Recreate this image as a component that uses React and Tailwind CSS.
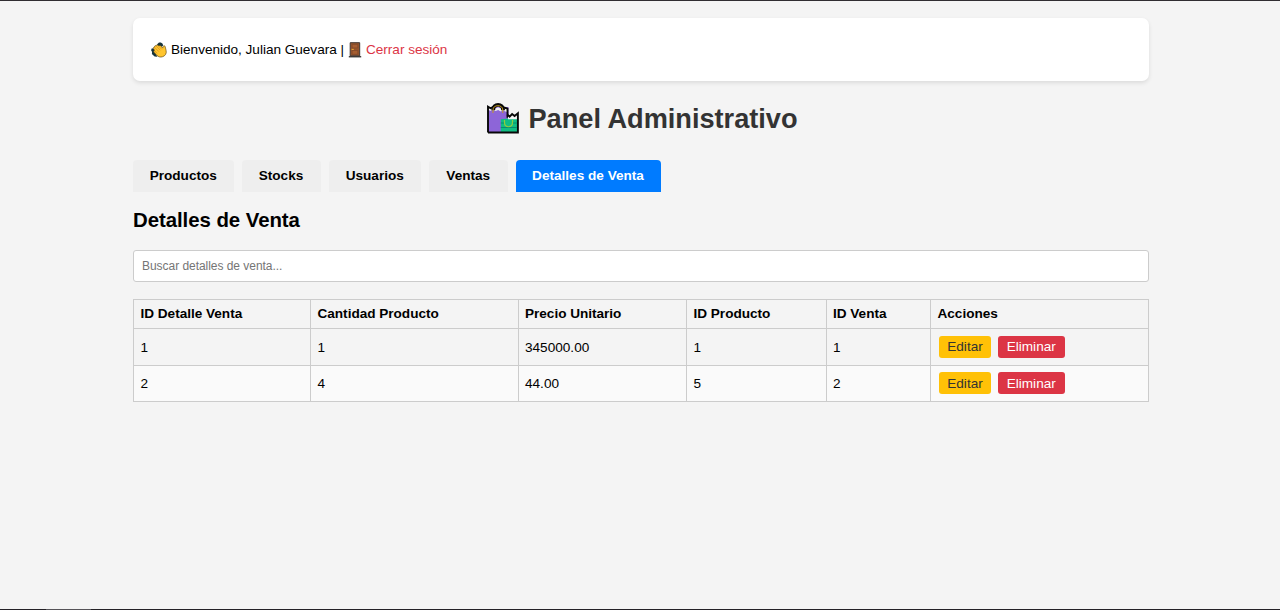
const tabs = [
  { label: 'Productos', size: 'w-[100.5px]' },
  { label: 'Stocks', size: 'w-[79px]' },
  { label: 'Usuarios', size: 'w-[92.5px]' },
  { label: 'Ventas', size: 'w-[78.5px]' },
  { label: 'Detalles de Venta', size: 'w-[145px]', active: true },
];

const columns = [
  { label: 'ID Detalle Venta', size: 'w-[177px]' },
  { label: 'Cantidad Producto', size: 'w-[207.5px]' },
  { label: 'Precio Unitario', size: 'w-[168.5px]' },
  { label: 'ID Producto', size: 'w-[139.5px]' },
  { label: 'ID Venta', size: 'w-[104.5px]' },
  { label: 'Acciones', size: 'w-[218px]' },
];

const rows = [
  { cells: ['1', '1', '345000.00', '1', '1'], size: 'h-[37px]' },
  { cells: ['2', '4', '44.00', '5', '2'], size: 'h-[36px]' },
];

function ClapIcon() {
  return (
    <svg viewBox="0 0 16 16" className="h-4 w-4 shrink-0" aria-hidden="true">
      <path d="M6.2 2.2 8 .4l1.8.2 1.6.9.9 2-1.8 1.3-4.4.4zM.4 6.8l1.6-.5 2 2 2.2 6.5-2.6-.4L.9 12l.2-2.2L.2 8.7z" fill="#17343b" />
      <path d="M2.6 6.6c-.5-1 .2-1.8 1-1.5-.3-1 .6-1.8 1.5-1.3.2-1 1.3-1.2 2-.5l.8.8c.5-.8 1.5-.8 2 0l1.8 2 .5-1.7c.4-1 1.8-.8 2 .3l.9 3.7c.8 3.2-1 5.5-3.5 6.3-2.1.8-4.2.2-5.6-1.2l-2.8-3c-.8-.8-.5-1.7.3-2z" fill="#ffc52e" stroke="#5b4514" strokeWidth=".65" />
      <path d="m3.6 5.4 4.2 4.2M5.1 4l4.3 4.3M7.8 4.3l3 3M3.4 8.5l2.8 2.8" fill="none" stroke="#d08a1d" strokeWidth=".65" />
    </svg>
  );
}

function DoorIcon() {
  return (
    <svg viewBox="0 0 14 16" className="h-4 w-3.5 shrink-0" aria-hidden="true">
      <path d="M2.2.7h9.5v13.2H2.2z" fill="#95552e" stroke="#403733" />
      <path d="M4.1 2.4h5.7v3.5H4.1zM4.1 8.5h5.7v3.8H4.1z" fill="#a65e31" stroke="#7b4428" strokeWidth=".6" />
      <path d="M.8 14.1h12.4v1.3H.8z" fill="#302d2c" />
      <path d="M3.6 7.4h2.2" stroke="#efaa35" strokeWidth="1" />
    </svg>
  );
}

function BagsIcon() {
  return (
    <svg viewBox="0 0 32 31" className="h-[31px] w-8 shrink-0" aria-hidden="true">
      <path d="M1 4h20.5v25.5H1z" fill="#8d65d8" />
      <path d="m1 4.4 2.5 1L6 4.4l2.5 1L11 4.2l2.8 1.2 3-1.1 4.2 1.6v3.4l-2.6-.8-2.2-1.2-2.4 1.1-2.6-1.3-2.8 1L5.7 7 3.5 7.8 1 7z" fill="#f4f4f4" />
      <path d="M1 29.5V3.6l2.6 1.6L6.2 4M17 4.5l3.5 1.2v9" fill="none" stroke="#080808" strokeWidth="1.9" />
      <path d="M6.3 7.2V6.3c0-2.6 2-4.4 4.8-4.4S16 3.7 16 6.3v.9" fill="none" stroke="#080808" strokeWidth="3.8" />
      <path d="M6 10V7c0-2.8 2-4.3 4.9-4.3S15.8 4.2 15.8 7v3" fill="none" stroke="#c59b1f" strokeWidth="1" />
      <path d="M21 15.5h10v14H13.8V16.2z" fill="#10bd83" />
      <path d="m21 12.6 2 2 2.2-2.3 2.7 1.8 2.9-2.7v4.9H21z" fill="#f4f4f4" />
      <path d="m20.2 11.6 2.4 2 2.5-2.6 2.5 2 3.3-2.7v19.2H1" fill="none" stroke="#080808" strokeWidth="1.9" />
      <path d="M13.8 20h4m8 0h4M13.8 24.5h16" stroke="#078b70" />
      <path d="M17.5 17v2.6c0 5.5 8 5.5 8 0V17" fill="none" stroke="#8dcc3f" strokeWidth="1.2" />
    </svg>
  );
}

export default function App() {
  return (
    <div className="flex h-[610px] flex-col overflow-hidden border-t border-[#302d31] bg-[#f4f4f4] font-['Liberation_Sans',Arial,sans-serif] text-[13.6px] leading-4 text-black">
      <main className="ml-[133px] w-[1016px] flex-1 pt-[17px]">
        <header className="flex h-[63px] items-center rounded-[7px] bg-white pl-[18px] shadow-[0_2px_4px_rgba(0,0,0,0.1)]">
          <ClapIcon />
          <span className="ml-1 w-[177px] whitespace-nowrap pt-px tracking-[-0.02px]">Bienvenido, Julian Guevara |</span>
          <DoorIcon />
          <a href="#" className="ml-1 whitespace-nowrap pt-px tracking-[-0.02px] text-[#dc3545]">Cerrar sesión</a>
        </header>

        <h1 className="mt-[21px] flex h-8 items-center pl-[354px] text-[27.2px] font-bold leading-8 text-[#333]">
          <BagsIcon />
          <span className="ml-[9.5px] whitespace-nowrap pt-px tracking-[-0.02px]">Panel Administrativo</span>
        </h1>

        <nav className="mt-[26px] flex gap-2">
          {tabs.map((tab) => (
            <button
              key={tab.label}
              className={`${tab.size} h-8 whitespace-nowrap rounded-t-[4px] font-bold ${tab.active ? 'bg-[#007bff] text-white' : 'bg-[#eee]'}`}
            >
              {tab.label}
            </button>
          ))}
        </nav>

        <h2 className="mt-4 text-[20.4px] font-bold leading-6 tracking-[-0.05px]">Detalles de Venta</h2>
        <input
          type="text"
          placeholder="Buscar detalles de venta..."
          className="mt-[18px] block h-8 w-full rounded-[3px] border border-[#ccc] bg-white px-2 text-[12px] tracking-[-0.04px] placeholder:text-[#757575]"
        />

        <table className="mt-[17px] w-[1016px] table-fixed border-collapse text-left">
          <thead>
            <tr className="h-[29px]">
              {columns.map((column) => (
                <th key={column.label} className={`${column.size} whitespace-nowrap border border-[#ccc] px-[6.5px] py-0 font-bold tracking-[-0.02px]`}>
                  {column.label}
                </th>
              ))}
            </tr>
          </thead>
          <tbody>
            {rows.map((row) => (
              <tr key={row.cells[0]} className={`${row.size} even:bg-[#fafafa]`}>
                {row.cells.map((value, index) => (
                  <td key={index} className="border border-[#ccc] px-[6.5px] pb-0 pt-px">{value}</td>
                ))}
                <td className="border border-[#ccc] px-2 pb-px pt-0">
                  <div className="flex gap-[7px]">
                    <button className="h-[22px] w-[52px] rounded-[3px] bg-[#ffc107] pt-px text-[#333]">Editar</button>
                    <button className="h-[22px] w-[66.5px] rounded-[3px] bg-[#dc3545] pt-px text-white">Eliminar</button>
                  </div>
                </td>
              </tr>
            ))}
          </tbody>
        </table>
      </main>
      <footer className="flex h-px bg-[#242126]">
        <div className="ml-[46px] w-[45px] bg-[#555358]" />
      </footer>
    </div>
  );
}
